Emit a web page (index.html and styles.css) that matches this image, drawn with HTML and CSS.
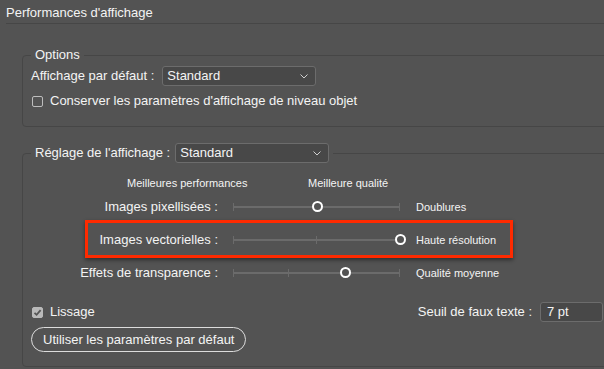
FILE: index.html
```html
<!DOCTYPE html>
<html lang="fr">
  <head>
    <meta charset="UTF-8" />
    <title>Performances d'affichage</title>
    <link rel="stylesheet" href="styles.css">
  </head>
  <body>
    <h1 class="title">Performances d'affichage</h1>

    <fieldset class="group">
      <legend>Options</legend>
      <div class="field-row">
        <label>Affichage par défaut :</label>
        <div class="select">
          <span>Standard</span>
          <svg width="8" height="5" viewBox="0 0 8 5"><path d="M0.5 0.5 L4 4 L7.5 0.5" fill="none" stroke="#cfcfcf" stroke-width="1"/></svg>
        </div>
      </div>
      <div class="check-row">
        <span class="box"></span>
        <span>Conserver les paramètres d'affichage de niveau objet</span>
      </div>
    </fieldset>

    <fieldset class="group group-tuning">
      <legend>
        <span>Réglage de l'affichage :</span>
        <div class="select">
          <span>Standard</span>
          <svg width="8" height="5" viewBox="0 0 8 5"><path d="M0.5 0.5 L4 4 L7.5 0.5" fill="none" stroke="#cfcfcf" stroke-width="1"/></svg>
        </div>
      </legend>

      <div class="hints">
        <span class="hint-left">Meilleures performances</span>
        <span>Meilleure qualité</span>
      </div>

      <div class="sliders">
        <div class="slider-label">Images pixellisées :</div>
        <div class="track">
          <i class="tick" style="left: 0%"></i>
          <i class="tick" style="left: 100%"></i>
          <b class="thumb" style="left: 50%"></b>
        </div>
        <div class="slider-value">Doublures</div>

        <div class="slider-label">Images vectorielles :</div>
        <div class="track">
          <i class="tick" style="left: 0%"></i>
          <i class="tick" style="left: 50%"></i>
          <b class="thumb" style="left: 100%"></b>
        </div>
        <div class="slider-value">Haute résolution</div>

        <div class="slider-label">Effets de transparence :</div>
        <div class="track">
          <i class="tick" style="left: 0%"></i>
          <i class="tick" style="left: 33%"></i>
          <i class="tick" style="left: 100%"></i>
          <b class="thumb" style="left: 67%"></b>
        </div>
        <div class="slider-value">Qualité moyenne</div>

        <div class="highlight"></div>
      </div>

      <div class="bottom-row">
        <div class="check-row">
          <span class="box checked">
            <svg width="9" height="9" viewBox="0 0 9 9"><path d="M1.5 4.8 L3.6 6.8 L7.6 2.2" fill="none" stroke="#555" stroke-width="1.8"/></svg>
          </span>
          <span>Lissage</span>
        </div>
        <div class="field-row">
          <label>Seuil de faux texte :</label>
          <div class="input">7 pt</div>
        </div>
      </div>

      <button class="pill">Utiliser les paramètres par défaut</button>
    </fieldset>
  </body>
</html>
```

FILE: styles.css
```css
html,
body {
  margin: 0;
  padding: 0;
}

body {
  width: 604px;
  height: 369px;
  overflow: hidden;
  background: #535353;
  color: #f4f4f4;
  font-family: "Liberation Sans", Arial, sans-serif;
  font-size: 13px;
  line-height: 16px;
}

.title {
  margin: 0 0 0 6px;
  padding: 5px 0 2px;
  font-size: 13px;
  font-weight: normal;
  line-height: 16px;
  border-bottom: 1px solid #464646;
}

.group {
  box-sizing: border-box;
  width: 590px;
  margin: 23px 0 0 22px;
  padding: 0 8px 17px;
  border: 1px solid #464646;
  border-radius: 4px;
}

.group legend {
  padding: 0 4px;
  line-height: 16px;
}

.field-row {
  display: flex;
  align-items: center;
  gap: 8px;
}

.group > .field-row {
  margin-top: 3px;
}

.select {
  box-sizing: border-box;
  width: 154px;
  height: 20px;
  display: flex;
  align-items: center;
  justify-content: space-between;
  padding: 0 7px 0 4px;
  background: #484848;
  border: 1px solid #6c6c6c;
  border-radius: 3px;
}

.check-row {
  display: flex;
  align-items: center;
  gap: 7px;
  height: 16px;
}

.group > .check-row {
  margin-top: 7px;
  padding-left: 1px;
}

.box {
  box-sizing: border-box;
  width: 11px;
  height: 11px;
  border: 1px solid #bdbdbd;
  border-radius: 2px;
  display: flex;
  align-items: center;
  justify-content: center;
}

.box.checked {
  background: #b9b9b9;
  border-color: #b9b9b9;
}

/* second group */
.group-tuning {
  margin-top: 16px;
  padding-bottom: 14px;
}

.group-tuning legend {
  display: flex;
  align-items: center;
  gap: 5px;
  padding: 0 4px;
}

.hints {
  display: flex;
  margin-top: 14px;
  padding-left: 96px;
  font-size: 11px;
  line-height: 13px;
}

.hint-left {
  width: 181px;
}

.sliders {
  position: relative;
  display: grid;
  grid-template-columns: 187px 166px auto;
  grid-auto-rows: 33px;
  column-gap: 16px;
  align-items: center;
}

.slider-label {
  text-align: right;
}

.slider-value {
  font-size: 11px;
}

.track {
  position: relative;
  height: 2px;
  background: #6b6b6b;
}

.tick {
  position: absolute;
  top: -3px;
  width: 1px;
  height: 8px;
  margin-left: -1px;
  background: #6b6b6b;
}

.thumb {
  position: absolute;
  top: -5px;
  box-sizing: border-box;
  width: 11px;
  height: 11px;
  margin-left: -5px;
  border: 2px solid #fff;
  border-radius: 50%;
  background: #535353;
}

.highlight {
  position: absolute;
  left: 54px;
  top: 30px;
  box-sizing: border-box;
  width: 428px;
  height: 38px;
  border: 3px solid #ff2a00;
  box-shadow: 0 2px 4px rgba(0, 0, 0, 0.45);
}

.bottom-row {
  display: flex;
  align-items: center;
  justify-content: space-between;
  height: 20px;
  margin-top: 13px;
  padding-left: 1px;
}

.input {
  box-sizing: border-box;
  width: 63px;
  height: 20px;
  padding: 0 6px;
  line-height: 18px;
  background: #484848;
  border: 1px solid #6c6c6c;
  border-radius: 3px;
}

.pill {
  display: block;
  height: 25px;
  margin-top: 5px;
  padding: 0 11px;
  font-family: inherit;
  font-size: 13px;
  color: #f4f4f4;
  background: transparent;
  border: 1px solid #dcdcdc;
  border-radius: 13px;
}
```
